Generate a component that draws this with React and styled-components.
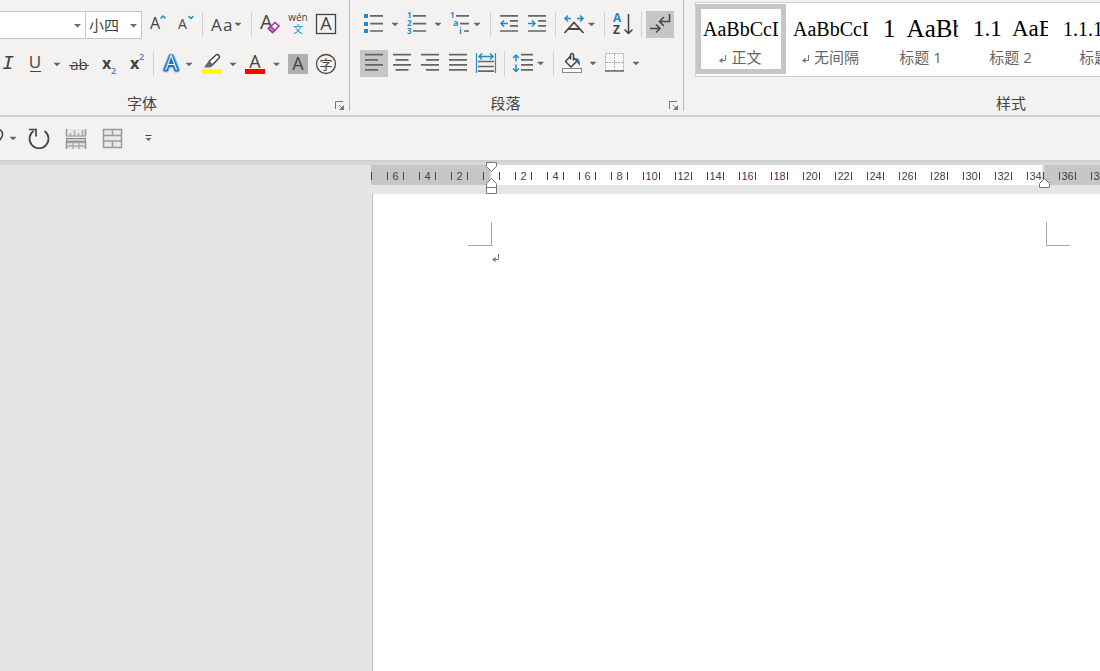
import styled, { createGlobalStyle } from "styled-components";

const BLUE = "#1e8bcd";
const INK = "#444";
const LINE = "#666";

const GlobalStyle = createGlobalStyle`
  * {
    box-sizing: border-box;
  }
  body {
    margin: 0;
    font-family: "Open Sans", "Noto Sans CJK SC", sans-serif;
    color: #444;
    background: #e5e5e5;
  }
  button, select {
    font: inherit;
    color: inherit;
  }
`;

const Window = styled.div`
  display: flex;
  flex-direction: column;
  min-height: 100vh;
  overflow: hidden;
`;

const Ribbon = styled.header`
  display: flex;
  height: 117px;
  background: #f3f2f1;
  border-bottom: 2px solid #d0cfce;
  overflow: hidden;
`;

const Group = styled.section`
  display: flex;
  flex-direction: column;
  flex: none;
  height: 111px;
  padding-top: 11px;
  border-right: 1px solid #b5b5b5;
`;

const FontGroup = styled(Group)`
  width: 393px;
  margin-left: -43px;
`;

const ParagraphGroup = styled(Group)`
  width: 334px;
`;

const StyleGroup = styled(Group)`
  flex: 1 0 654px;
  padding-top: 2px;
  border-right: none;
`;

const ToolRow = styled.div`
  display: flex;
  height: 27px;
  margin-bottom: 12px;
  padding-left: ${({ $indent }) => $indent || 0}px;
`;

const ToolButton = styled.button`
  flex: none;
  width: ${({ $w }) => $w}px;
  height: 27px;
  padding: 0;
  border: none;
  background: ${({ $on }) => ($on ? "#c6c6c6" : "none")};

  svg {
    display: block;
    overflow: visible;
  }
`;

const Separator = styled.span`
  flex: none;
  width: 1px;
  height: 25px;
  margin: 1px 4px;
  background: #d0d0d0;
`;

const GroupFooter = styled.footer`
  display: flex;
  align-items: flex-end;
  height: 16px;
  margin-top: auto;
`;

const GroupName = styled.h2`
  flex: 1;
  margin: 0;
  font-size: 15px;
  font-weight: 400;
  line-height: 16px;
  text-align: center;
`;

const Launcher = styled.button`
  width: 22px;
  height: 10px;
  padding: 0 0 0 8px;
  border: none;
  background: none;

  svg {
    display: block;
  }
`;

const Combo = styled.label`
  position: relative;
  flex: none;
  width: ${({ $w }) => $w}px;
  height: 28px;
  border: 1px solid #c6c6c6;
  background: #fff;

  & + & {
    margin-left: -1px;
  }

  select {
    width: 100%;
    height: 26px;
    padding: 0 0 0 3px;
    border: none;
    font-size: 15px;
    background: none;
    appearance: none;
  }

  svg {
    position: absolute;
    right: 4px;
    top: 12px;
    pointer-events: none;
  }
`;

const Gallery = styled.div`
  display: flex;
  height: 75px;
  margin-left: 11px;
  padding-top: 1px;
  border: 1px solid #d0cfce;
  border-right: none;
  background: #fff;
`;

const StyleCard = styled.button`
  display: flex;
  flex-direction: column;
  flex: none;
  width: 90px;
  height: 70px;
  padding: 5px 2px 0;
  border: 5px solid ${({ $on }) => ($on ? "#c6c6c6" : "transparent")};
  background: none;
  text-align: left;
`;

const Preview = styled.span`
  flex: none;
  width: 75px;
  height: 30px;
  overflow: hidden;
  white-space: pre;
  font-family: "Liberation Serif", serif;
  font-size: ${({ $size }) => $size}px;
  line-height: 30px;
  color: #000;
`;

const StyleName = styled.span`
  display: flex;
  align-items: center;
  justify-content: center;
  gap: 4px;
  width: 75px;
  margin-top: 4px;
  font-size: 15px;
  line-height: 18px;
  white-space: nowrap;
  color: #666;

  svg {
    margin-top: 4px;
  }
`;

const QuickBar = styled.nav`
  display: flex;
  align-items: center;
  height: 45px;
  background: #f3f2f1;
  border-bottom: 2px solid #d0cfce;
`;

const Workspace = styled.main`
  display: flex;
  flex-direction: column;
  flex: 1;
  padding-left: 371px;
  border-top: 3px solid #d8d8d8;
`;

const Ruler = styled.div`
  position: relative;
  display: flex;
  align-items: center;
  flex: none;
  width: 796px;
  height: 20px;
  background: linear-gradient(
    to right,
    #c6c6c6 119px,
    #e3e3e3 119px 121px,
    #fff 121px 671px,
    #e3e3e3 671px 673px,
    #c6c6c6 673px
  );
`;

const Tick = styled.span`
  flex: none;
  width: 16px;
  height: 8px;
  margin-top: 2px;
  border-left: 1px solid #444;
  font-family: "Liberation Sans", sans-serif;
  font-size: 11px;
  line-height: 8px;
  text-align: center;
`;

const Marker = styled.svg`
  position: absolute;
  left: ${({ $x }) => $x}px;
  top: ${({ $y }) => $y}px;
  fill: #fff;
  stroke: #777;
`;

const Page = styled.article`
  flex: 1;
  width: 795px;
  margin-top: 9px;
  margin-left: 1px;
  padding: 28px 97px 0 95px;
  border-left: 1px solid #c0c0c0;
  background: #fff;
`;

const MarginMarks = styled.div`
  display: flex;
  justify-content: space-between;
`;

const Corner = styled.span`
  width: 24px;
  height: 24px;
  border: 0 solid #aaa;
  border-bottom-width: 1px;
  border-left-width: ${({ $side }) => ($side === "right" ? 1 : 0)}px;
  border-right-width: ${({ $side }) => ($side === "left" ? 1 : 0)}px;
`;

const Paragraph = styled.p`
  display: flex;
  margin: 8px 24px 0;
`;

function Tool({ name, w = 28, on, children }) {
  return (
    <ToolButton type="button" aria-label={name} aria-pressed={on} $w={w} $on={on}>
      <svg width={w} height="27" fill="none" stroke={INK} strokeWidth="1.5">
        {children}
      </svg>
    </ToolButton>
  );
}

function Caret({ name, w = 16, y = 13 }) {
  return (
    <Tool name={name} w={w}>
      <path
        d={`M${w / 2 - 3} ${y}h6l-3 3z`}
        fill={LINE}
        stroke={LINE}
        strokeWidth="0.5"
      />
    </Tool>
  );
}

// letters that are part of an icon
function Glyph({ size = 17, fill = INK, children, ...rest }) {
  return (
    <text fontSize={size} fill={fill} stroke="none" {...rest}>
      {children}
    </text>
  );
}

// rows: [x1, x2, y]
function Bars({ rows }) {
  return (
    <path
      d={rows.map(([x1, x2, y]) => `M${x1} ${y}H${x2}`).join("")}
      stroke={LINE}
      strokeWidth="1.7"
    />
  );
}

function ReturnMark() {
  return (
    <svg width="8" height="9" fill="none" stroke="#777">
      <path d="M6.5 0V5.5H2" />
      <path d="M0 5.5l3.5-2.8v5.6z" fill="#777" stroke="none" />
    </svg>
  );
}

function ComboBox({ label, w, options }) {
  return (
    <Combo $w={w}>
      <select aria-label={label}>
        {options.map((o) => (
          <option key={o}>{o}</option>
        ))}
      </select>
      <svg width="7" height="4">
        <path d="M0 0h7l-3.5 3.5z" fill={LINE} />
      </svg>
    </Combo>
  );
}

function Footer({ name, launcher }) {
  return (
    <GroupFooter>
      <GroupName>{name}</GroupName>
      {launcher && (
        <Launcher type="button" aria-label={`${name}设置`}>
          <svg width="10" height="10" fill="none" stroke="#777">
            <path d="M0.5 8V0.5H8M4 4l4 4" />
            <path d="M9 4v5H4z" fill="#777" stroke="none" />
          </svg>
        </Launcher>
      )}
    </GroupFooter>
  );
}

function FontTools() {
  return (
    <FontGroup>
      <ToolRow>
        <ComboBox label="字体" w={129} options={[""]} />
        <ComboBox label="字号" w={57} options={["小四"]} />
        <Tool name="增大字号" w={30}>
          <Glyph x="8" y="18" size={16}>A</Glyph>
          <path d="M18.5 7.5l2.5-2.5 2.5 2.5" stroke={BLUE} />
        </Tool>
        <Tool name="减小字号" w={26}>
          <Glyph x="6" y="18" size={14}>A</Glyph>
          <path d="M16.5 5l2.5 2.5 2.5-2.5" stroke={BLUE} />
        </Tool>
        <Separator />
        <Tool name="更改大小写" w={40}>
          <Glyph x="4" y="20">A</Glyph>
          <Glyph x="16" y="20">a</Glyph>
          <path d="M28 12h6l-3 3z" fill={LINE} stroke={LINE} strokeWidth="0.5" />
        </Tool>
        <Separator />
        <Tool name="清除所有格式">
          <Glyph x="4" y="18" size={20}>A</Glyph>
          <path d="M12.5 17.5l6.5-6 4 3.5-6.5 6.5z" fill="#f3f2f1" stroke="#9b35a8" />
          <path d="M12.5 17.5l2.2-2 4 3.8-2.2 2.2z" fill="#c98bd2" stroke="#9b35a8" />
        </Tool>
        <Tool name="拼音指南">
          <Glyph x="14" y="10" size={10} textAnchor="middle">wén</Glyph>
          <Glyph x="14" y="22" size={10} fill={BLUE} textAnchor="middle">文</Glyph>
        </Tool>
        <Tool name="字符边框">
          <rect x="4.5" y="3.5" width="19" height="19" strokeWidth="1.3" />
          <Glyph x="14" y="19" size={18} textAnchor="middle">A</Glyph>
        </Tool>
      </ToolRow>
      <ToolRow $indent={43}>
        <Tool name="倾斜" w={21}>
          <Glyph x="2" y="19" size={20} fontFamily="Liberation Mono, monospace" fontStyle="italic">
            I
          </Glyph>
        </Tool>
        <Tool name="下划线">
          <Glyph x="14" y="18" textAnchor="middle">U</Glyph>
          <path d="M9 21.5h11" strokeWidth="1" />
        </Tool>
        <Caret name="下划线样式" />
        <Tool name="删除线">
          <Glyph x="14" y="20" size={15} textAnchor="middle">ab</Glyph>
          <path d="M4 15.5h20" strokeWidth="1" />
        </Tool>
        <Tool name="下标" w={30}>
          <Glyph x="9" y="19" size={16} fontWeight="700">x</Glyph>
          <Glyph x="18" y="24" size={9} fill={BLUE} fontWeight="600">2</Glyph>
        </Tool>
        <Tool name="上标" w={26}>
          <Glyph x="7" y="19" size={16} fontWeight="700">x</Glyph>
          <Glyph x="16" y="10" size={9} fill={BLUE} fontWeight="600">2</Glyph>
        </Tool>
        <Separator />
        <Tool name="文本效果" w={23}>
          <g textAnchor="middle" strokeLinejoin="round">
            <Glyph x="13" y="20" size={20} stroke="#9ccbee" strokeWidth="5">A</Glyph>
            <Glyph x="13" y="20" size={20} stroke="#1a73bd" strokeWidth="3">A</Glyph>
            <Glyph x="13" y="20" size={20} fill="#fff" fontWeight="300">A</Glyph>
          </g>
        </Tool>
        <Caret name="文本效果选项" />
        <Tool name="突出显示">
          <path d="M12 11.5L19 5c2-1.5 4.5 1 3 3l-6.5 6.8-3.5.2z" fill="#fff" />
          <path d="M12 10.5l4.5 4.5-3 2.5H7z" fill={LINE} stroke="none" />
          <rect x="5" y="19" width="20" height="5" fill="#ff0" stroke="none" />
        </Tool>
        <Caret name="突出显示颜色" />
        <Tool name="字体颜色">
          <Glyph x="14" y="18" size={18} textAnchor="middle">A</Glyph>
          <rect x="4" y="19" width="20" height="5" fill="#f00" stroke="none" />
        </Tool>
        <Caret name="字体颜色选项" w={15} />
        <Tool name="字符底纹">
          <rect x="4" y="4" width="20" height="20" fill="#b0b0b0" stroke="none" />
          <Glyph x="14" y="20" size={18} textAnchor="middle">A</Glyph>
        </Tool>
        <Tool name="带圈字符">
          <circle cx="14" cy="14" r="9.5" strokeWidth="1.3" />
          <Glyph x="14" y="19" size={13} textAnchor="middle">字</Glyph>
        </Tool>
      </ToolRow>
      <Footer name="字体" launcher />
    </FontGroup>
  );
}

function ParagraphTools() {
  return (
    <ParagraphGroup>
      <ToolRow $indent={10}>
        <Tool name="项目符号" w={27}>
          <path d="M4 3h4v4h-4zM4 11h4v4h-4zM4 18h4v4h-4z" fill={BLUE} stroke="none" />
          <Bars rows={[[10, 23, 4.8], [10, 23, 12.7], [10, 23, 20]]} />
        </Tool>
        <Caret name="项目符号库" y={12} />
        <Tool name="编号">
          <Glyph x="4" y="7" size={8} fill={BLUE} fontWeight="700">1</Glyph>
          <Glyph x="4" y="15" size={8} fill={BLUE} fontWeight="700">2</Glyph>
          <Glyph x="4" y="23" size={8} fill={BLUE} fontWeight="700">3</Glyph>
          <Bars rows={[[10, 23, 4.8], [10, 23, 12.7], [10, 23, 20]]} />
        </Tool>
        <Caret name="编号库" w={14} y={12} />
        <Tool name="多级列表" w={23}>
          <Glyph x="5" y="7" size={8} fill={BLUE} fontWeight="700">1</Glyph>
          <Glyph x="8" y="15" size={9} fill={BLUE} fontWeight="700">a</Glyph>
          <Glyph x="14" y="23" size={9} fill={BLUE} fontWeight="700">i</Glyph>
          <Bars rows={[[11, 24, 4.8], [15, 24, 12.7], [19, 24, 20]]} />
        </Tool>
        <Caret name="列表库" w={18} y={12} />
        <Separator />
        <Tool name="减少缩进量">
          <Bars rows={[[5, 23, 4.8], [15, 23, 9.8], [15, 23, 14.8], [5, 23, 20]]} />
          <path d="M13 12.5H6M9 9.5l-3 3 3 3" stroke={BLUE} />
        </Tool>
        <Tool name="增加缩进量">
          <Bars rows={[[5, 23, 4.8], [15, 23, 9.8], [15, 23, 14.8], [5, 23, 20]]} />
          <path d="M5 12.5h7M9 9.5l3 3-3 3" stroke={BLUE} />
        </Tool>
        <Separator />
        <Tool name="中文版式" w={23}>
          <path d="M11 7.5H5M8 4.5l-3 3 3 3M17 7.5h6M20 4.5l3 3-3 3" stroke={BLUE} />
          <path d="M4.5 22L14 11.5 23.5 22M8 18h12" strokeWidth="1.8" />
        </Tool>
        <Caret name="中文版式选项" w={17} y={12} />
        <Separator />
        <Tool name="排序">
          <Glyph x="4" y="11" size={12} fill={BLUE} fontWeight="700">A</Glyph>
          <Glyph x="4" y="23" size={12} fontWeight="700">Z</Glyph>
          <path d="M19.5 3v19M15.5 18.5l4 4 4-4" />
        </Tool>
        <Separator />
        <Tool name="显示编辑标记" on>
          <path d="M23.5 3v7.5H14M18 6l-4.5 4.5L18 15M4 17.5h10M10 13.5l4 4-4 4" />
        </Tool>
      </ToolRow>
      <ToolRow $indent={10}>
        <Tool name="左对齐" on>
          <Bars rows={[[5, 23, 4.7], [5, 18, 9.8], [5, 23, 14.8], [5, 18, 19.8]]} />
        </Tool>
        <Tool name="居中">
          <Bars rows={[[5, 23, 4.7], [7.5, 20.5, 9.8], [5, 23, 14.8], [7.5, 20.5, 19.8]]} />
        </Tool>
        <Tool name="右对齐">
          <Bars rows={[[5, 23, 4.7], [10, 23, 9.8], [5, 23, 14.8], [10, 23, 19.8]]} />
        </Tool>
        <Tool name="两端对齐">
          <Bars rows={[[5, 23, 4.7], [5, 23, 9.8], [5, 23, 14.8], [5, 23, 19.8]]} />
        </Tool>
        <Tool name="分散对齐">
          <path d="M4.5 3v20M23.5 3v20" stroke={BLUE} strokeWidth="1.2" />
          <path d="M7 6.5h14M10 3.5l-3 3 3 3M18 3.5l3 3-3 3" stroke={BLUE} />
          <Bars rows={[[6, 22, 11.5], [6, 22, 16.5], [6, 22, 21.2]]} />
        </Tool>
        <Separator />
        <Tool name="行距" w={23}>
          <path d="M7 11.5V5M4 8l3-3 3 3M7 14.5V21M4 18.5l3 3 3-3" stroke={BLUE} />
          <Bars rows={[[12, 24, 4.7], [12, 24, 9.8], [12, 24, 14.8], [12, 24, 19.8]]} />
        </Tool>
        <Caret name="行距选项" w={17} y={12} />
        <Separator />
        <Tool name="底纹" w={27}>
          <path d="M12.5 6L7.5 11.5l5.5 5.5 6-6L15 7M12.5 9.5V5c.5-2 3-2 3 0v5.5" />
          <path d="M18 8c2.5 0 4 2 4 7.5l-2.5-2-.5-3z" fill="#1a73bd" stroke="none" />
          <rect x="4.5" y="18.5" width="19" height="4" fill="#fff" stroke="#888" strokeWidth="1" />
        </Tool>
        <Caret name="底纹颜色" y={12} />
        <Tool name="边框" w={27}>
          <rect x="4.5" y="3.5" width="18" height="17" fill="#fafafa" stroke="#aaa" strokeWidth="1" strokeDasharray="2 1" />
          <path d="M13.5 4v17M5 12.5h18" stroke="#aaa" strokeWidth="1" strokeDasharray="2 1" />
          <path d="M4 21h19" stroke={LINE} />
        </Tool>
        <Caret name="边框选项" y={12} />
      </ToolRow>
      <Footer name="段落" launcher />
    </ParagraphGroup>
  );
}

const STYLES = [
  { name: "正文", preview: "AaBbCcDd", size: 20, mark: true },
  { name: "无间隔", preview: "AaBbCcDd", size: 20, mark: true },
  { name: "标题 1", preview: "1  AaBb", size: 25 },
  { name: "标题 2", preview: "1.1  AaBb", size: 23 },
  { name: "标题 3", preview: "1.1.1  Aa", size: 20 },
];

function StyleGallery() {
  return (
    <StyleGroup>
      <Gallery>
        {STYLES.map((s, i) => (
          <StyleCard key={s.name} type="button" $on={i === 0}>
            <Preview $size={s.size}>{s.preview}</Preview>
            <StyleName>
              {s.mark && <ReturnMark />}
              {s.name}
            </StyleName>
          </StyleCard>
        ))}
      </Gallery>
      <Footer name="样式" />
    </StyleGroup>
  );
}

function QuickAccess() {
  return (
    <QuickBar>
      <Tool name="撤消" w={5}>
        <path d="M-6 5C0 3 2.5 6 2.5 9.5S0 15-4 19" />
      </Tool>
      <Caret name="撤消历史" y={12} />
      <Tool name="重复" w={36}>
        <path d="M23.5 6A9.5 9.5 0 1 1 12.5 6M8 4.5h7v7" strokeWidth="1.7" />
      </Tool>
      <Tool name="标尺" w={37}>
        <rect x="9" y="4" width="20" height="20" fill="#e9e9e9" stroke="none" />
        <path d="M9.5 4v7M28.5 4v7M9.5 17v7M28.5 17v7" stroke="#999" />
        <path d="M13.5 11V8M17.5 11V5M21.5 11V8M25.5 11V5" stroke="#aaa" />
        <path d="M16 18v6M22 18v6M10 21h18M9 17.5h20" stroke="#aaa" />
        <path d="M9 11h20" stroke="#aaa" />
        <rect x="9.5" y="13.5" width="19" height="3" fill="#d0d0d0" stroke="#888" strokeWidth="1" />
      </Tool>
      <Tool name="表格" w={37}>
        <path d="M9.5 4.5h18v18h-18z" fill="#e9e9e9" stroke="#999" />
        <path d="M9.5 10.5h18M9.5 16h18M18.5 4.5v6M18.5 16v6.5" stroke="#999" />
      </Tool>
      <Tool name="自定义快速访问工具栏" w={34}>
        <path d="M14.5 10.5h6" strokeWidth="1" />
        <path d="M14.5 13h6l-3 3z" fill={LINE} stroke="none" />
      </Tool>
    </QuickBar>
  );
}

// the zero mark is the eighth cell; every other cell carries a number
const TICKS = Array.from({ length: 49 }, (_, i) => {
  const n = Math.abs(i - 7);
  return i % 2 === 1 && n > 0 ? n : "";
});

function HorizontalRuler() {
  return (
    <Ruler>
      {TICKS.map((n, i) => (
        <Tick key={i}>{n}</Tick>
      ))}
      <Marker $x={115} $y={-3} width="11" height="11">
        <path d="M0.5 0.5h10v4l-5 5-5-5z" />
      </Marker>
      <Marker $x={115} $y={13} width="11" height="16">
        <path d="M5.5 0.5l5 5v10h-10v-10zM0.5 9.5h10" />
      </Marker>
      <Marker $x={668} $y={13} width="11" height="11">
        <path d="M5.5 0.5l5 5v4h-10v-4z" />
      </Marker>
    </Ruler>
  );
}

function App() {
  return (
    <Window>
      <GlobalStyle />
      <Ribbon>
        <FontTools />
        <ParagraphTools />
        <StyleGallery />
      </Ribbon>
      <QuickAccess />
      <Workspace>
        <HorizontalRuler />
        <Page>
          <MarginMarks>
            <Corner $side="left" />
            <Corner $side="right" />
          </MarginMarks>
          <Paragraph>
            <ReturnMark />
          </Paragraph>
        </Page>
      </Workspace>
    </Window>
  );
}

export default App;
